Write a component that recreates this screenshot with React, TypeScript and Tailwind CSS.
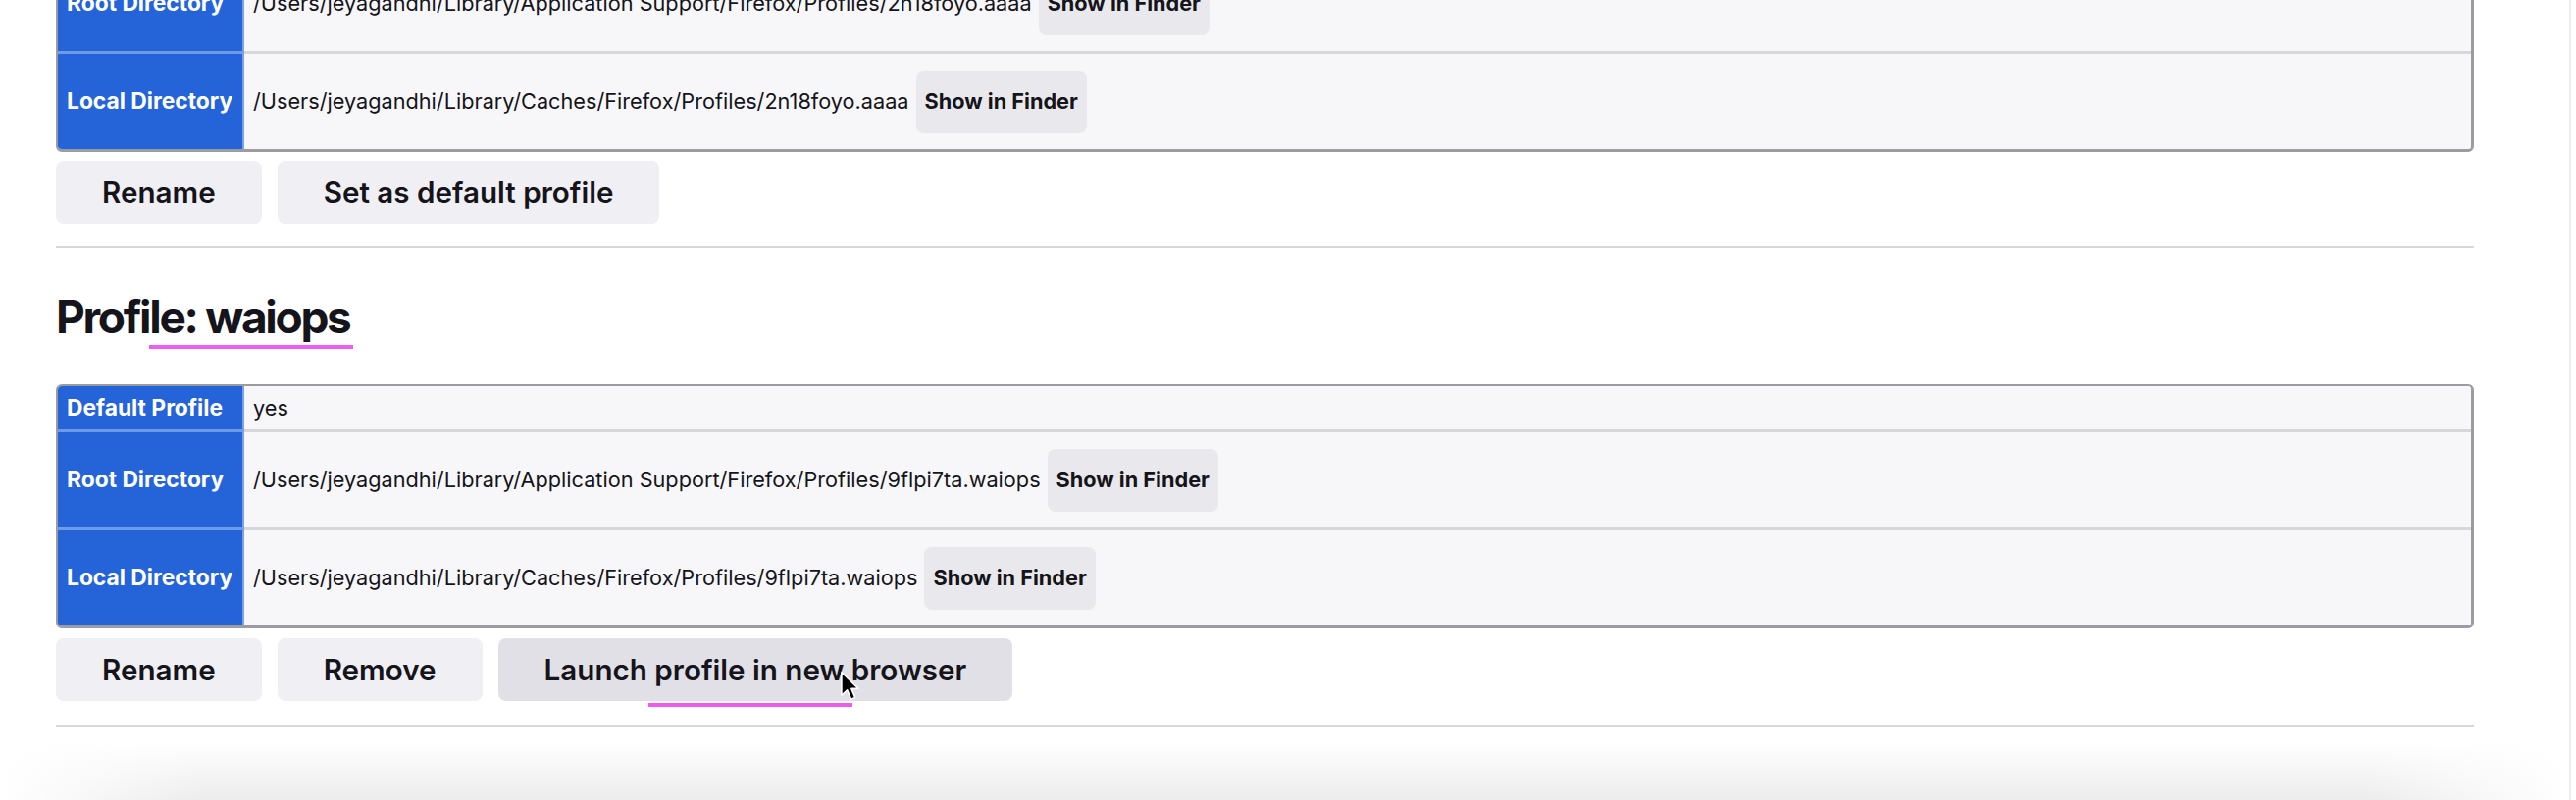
import React from 'react'

const font = "font-['Inter','Liberation_Sans',sans-serif]"

type Row = { label: string; value: string; finder?: boolean; tall?: boolean }

const InfoTable = ({ rows }: { rows: Row[] }) => {
  return (
    <div className="flex flex-col rounded-[6px] border-2 border-b-[3px] border-r-[3px] border-[#9b9ba1] overflow-hidden">
      {rows.map((r, i) => {
        // rows after the first carry a 3px separator on top
        const h = r.tall ? (i > 0 ? 'h-[100px]' : 'h-[97px]') : i > 0 ? 'h-[47px]' : 'h-[44px]'
        return (
          <div key={r.label} className={`flex ${h}`}>
            <div
              className={`w-[190px] shrink-0 flex items-center pl-[9px] bg-[#2563d9] border-r-2 border-r-[#7aa2e8] text-white font-bold text-[22.8px] ${
                i > 0 ? 'border-t-[3px] border-t-[#6f9be6]' : ''
              }`}
            >
              {r.label}
            </div>
            <div
              className={`flex-1 flex items-center pl-[9px] bg-[#f7f7f9] text-[21.7px] text-[#15141a] ${
                i > 0 ? 'border-t-[3px] border-t-[#d7d7db]' : ''
              }`}
            >
              <span>{r.value}</span>
              {r.finder && (
                <button className="ml-[7px] h-[64px] px-[9px] rounded-[8px] bg-[#e9e9ed] font-bold text-[21.7px] text-[#15141a]">
                  Show in Finder
                </button>
              )}
            </div>
          </div>
        )
      })}
    </div>
  )
}

const Btn = ({ children, hover }: { children: React.ReactNode; hover?: boolean }) => (
  <button
    className={`h-[64px] px-[47px] rounded-[8px] text-[29.6px] font-semibold text-[#15141a] ${
      hover ? 'bg-[#e0e0e6]' : 'bg-[#f0f0f4]'
    }`}
  >
    {children}
  </button>
)

const Cursor = () => (
  <svg width="21" height="31" viewBox="0 0 18 27" className="absolute left-[856px] top-[684px]">
    <path
      d="M1.5 1.5 L1.5 22 L6.5 17.2 L10 25.5 L13.5 24 L10.2 16 L16.5 16 Z"
      fill="#000"
      stroke="#fff"
      strokeWidth="1.4"
      strokeLinejoin="round"
    />
  </svg>
)

const App = () => {
  return (
    <div className={`relative flex h-[816px] w-[2626px] overflow-hidden bg-white ${font}`}>
      <main className="flex-1 pl-[57px]">
        <div className="w-[2465px] mt-[-47px]">
          <InfoTable
            rows={[
              {
                label: 'Root Directory',
                value: '/Users/jeyagandhi/Library/Application Support/Firefox/Profiles/2n18foyo.aaaa',
                finder: true,
                tall: true,
              },
              {
                label: 'Local Directory',
                value: '/Users/jeyagandhi/Library/Caches/Firefox/Profiles/2n18foyo.aaaa',
                finder: true,
                tall: true,
              },
            ]}
          />
          <div className="flex gap-4 mt-[9px]">
            <Btn>Rename</Btn>
            <Btn>Set as default profile</Btn>
          </div>
          <hr className="mt-[23px] border-0 h-[2px] bg-[#d7d7db]" />

          <h2 className="mt-[42px] text-[46px] leading-[56px] font-bold tracking-[-2.3px] text-[#15141a]">
            Profile: waiops
          </h2>

          <div className="mt-[41px]">
            <InfoTable
              rows={[
                { label: 'Default Profile', value: 'yes' },
                {
                  label: 'Root Directory',
                  value: '/Users/jeyagandhi/Library/Application Support/Firefox/Profiles/9flpi7ta.waiops',
                  finder: true,
                  tall: true,
                },
                {
                  label: 'Local Directory',
                  value: '/Users/jeyagandhi/Library/Caches/Firefox/Profiles/9flpi7ta.waiops',
                  finder: true,
                  tall: true,
                },
              ]}
            />
          </div>
          <div className="flex gap-4 mt-[10px]">
            <Btn>Rename</Btn>
            <Btn>Remove</Btn>
            <Btn hover>Launch profile in new browser</Btn>
          </div>
          <hr className="mt-[25px] border-0 h-[2px] bg-[#d7d7db]" />
        </div>
      </main>
      <div className="w-[7px] border-l-2 border-[#ececec]" />

      {/* highlight marks */}
      <div className="absolute left-[152px] top-[352px] w-[208px] h-[4px] bg-[#ee5cf2]" />
      <div className="absolute left-[661px] top-[717px] w-[208px] h-[4px] bg-[#ee5cf2]" />

      {/* window shadow at the bottom */}
      <div className="absolute left-0 right-[7px] bottom-0 h-[60px] bg-linear-to-b from-transparent to-[#ececec] [mask-image:linear-gradient(to_right,transparent,black_8%,black_92%,transparent)]" />

      <Cursor />
    </div>
  )
}

export default App
